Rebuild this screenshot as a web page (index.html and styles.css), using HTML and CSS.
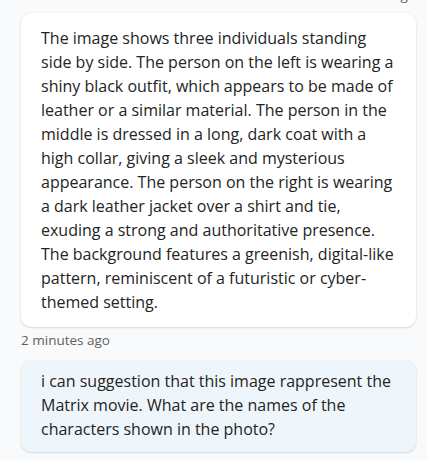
FILE: index.html
```html
<!DOCTYPE html>
<html lang="en">
<head>
<meta charset="utf-8">
<title>Chat</title>
<link rel="stylesheet" href="styles.css">
</head>
<body>
<div class="chat">
  <div class="stamp stamp-right stamp-top">2 minutes ago</div>
  <div class="bubble bubble-bot">
    The image shows three individuals standing side by side. The person on the left is wearing a shiny black outfit, which appears to be made of leather or a similar material. The person in the middle is dressed in a long, dark coat with a high collar, giving a sleek and mysterious appearance. The person on the right is wearing a dark leather jacket over a shirt and tie, exuding a strong and authoritative presence. The background features a greenish, digital-like pattern, reminiscent of a futuristic or cyber-themed setting.
  </div>
  <div class="stamp">2 minutes ago</div>
  <div class="bubble bubble-user">
    i can suggestion that this image rappresent the Matrix movie. What are the names of the characters shown in the photo?
  </div>
  <div class="stamp stamp-right">2 minutes ago</div>
</div>
</body>
</html>
```
FILE: styles.css
```css
html, body {
  margin: 0;
  padding: 0;
  background: #f9fafb;
  height: 100%;
  overflow: hidden;
}
body {
  font-family: "Open Sans", "Noto Sans", sans-serif;
  color: #242424;
}
.chat {
  display: flex;
  flex-direction: column;
  padding: 0 11px 0 21px;
}
.bubble {
  border-radius: 10px;
  font-size: 16px;
  line-height: 24px;
  padding: 13px 20px;
  box-shadow: 0 1px 2px rgba(0,0,0,0.12), 0 0 2px rgba(0,0,0,0.08);
}
.bubble-bot {
  background: #ffffff;
}
.bubble-user {
  background: #eff6fb;
  padding: 8px 20px 11px;
}
.stamp {
  font-size: 13.5px;
  line-height: 18px;
  color: #616161;
  margin: 4px 0 12px;
}
.stamp-right {
  text-align: right;
}
.stamp-top {
  margin: -14px 0 9px;
}
```
